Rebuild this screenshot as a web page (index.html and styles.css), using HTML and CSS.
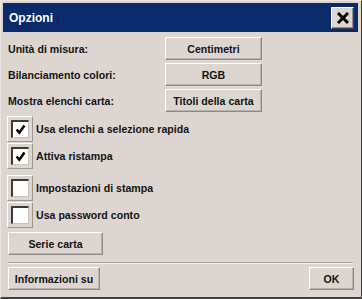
FILE: index.html
```html
<!DOCTYPE html>
<html lang="it">

<head>
    <meta charset="UTF-8">
    <meta name="viewport" content="width=device-width, initial-scale=1.0">
    <title>Opzioni</title>
    <link rel="stylesheet" href="styles.css">
</head>

<body>
    <div class="window">
        <div class="titlebar">
            <span class="title">Opzioni</span>
            <button class="close">
                <svg width="14" height="14" viewBox="0 0 14 14">
                    <path d="M2 2 L12 12 M12 2 L2 12" stroke="#000" stroke-width="3" fill="none" />
                </svg>
            </button>
        </div>

        <div class="content">
            <div class="setting">
                <span class="label">Unità di misura:</span>
                <button class="btn choice">Centimetri</button>
            </div>
            <div class="setting">
                <span class="label">Bilanciamento colori:</span>
                <button class="btn choice">RGB</button>
            </div>
            <div class="setting">
                <span class="label">Mostra elenchi carta:</span>
                <button class="btn choice">Titoli della carta</button>
            </div>

            <div class="checks">
                <label class="check">
                    <span class="frame"><span class="box">
                        <svg width="11" height="11" viewBox="0 0 14 14">
                            <path d="M2 7 L5.5 11 L12 2" stroke="#000" stroke-width="3.2" fill="none" />
                        </svg>
                    </span></span>
                    Usa elenchi a selezione rapida
                </label>
                <label class="check">
                    <span class="frame"><span class="box">
                        <svg width="11" height="11" viewBox="0 0 14 14">
                            <path d="M2 7 L5.5 11 L12 2" stroke="#000" stroke-width="3.2" fill="none" />
                        </svg>
                    </span></span>
                    Attiva ristampa
                </label>
            </div>

            <div class="checks second">
                <label class="check">
                    <span class="frame"><span class="box"></span></span>
                    Impostazioni di stampa
                </label>
                <label class="check">
                    <span class="frame"><span class="box"></span></span>
                    Usa password conto
                </label>
            </div>

            <button class="btn serie">Serie carta</button>
        </div>

        <div class="separator"></div>

        <div class="footer">
            <button class="btn info">Informazioni su</button>
            <button class="btn ok">OK</button>
        </div>
    </div>
</body>

</html>
```

FILE: styles.css
```css
* {
    margin: 0px;
    padding: 0px;
    box-sizing: border-box;
}

body {
    background-color: #ddd6d0;
    font-family: "Liberation Sans", Arial, sans-serif;
    font-size: 10.6px;
    font-weight: bold;
    color: #141414;
}

.window {
    width: 362px;
    height: 299px;
    border-top: 1px solid #ebe6e1;
    border-left: 1px solid #ebe6e1;
    border-right: 1px solid #404040;
    border-bottom: 2px solid #404040;
    padding: 2px 3px 0px 2px;
    display: flex;
    flex-direction: column;
}

.titlebar {
    height: 29px;
    background-color: #0b2a6b;
    display: flex;
    align-items: center;
    justify-content: space-between;
    padding: 0px 4px 0px 6px;
}

.title {
    color: white;
    font-size: 12px;
}

.close {
    width: 23px;
    height: 22px;
    background-color: #ddd6d0;
    border-top: 1px solid #ffffff;
    border-left: 1px solid #ffffff;
    border-right: 1px solid #404040;
    border-bottom: 1px solid #404040;
    box-shadow: inset -1px -1px #8e8984;
    display: flex;
    align-items: center;
    justify-content: center;
}

.content {
    padding: 5px 0px 0px 5px;
    display: flex;
    flex-direction: column;
}

.setting {
    display: flex;
    align-items: center;
    height: 23px;
    margin-bottom: 3px;
}

.label {
    width: 157px;
}

.btn {
    height: 23px;
    background-color: #ddd6d0;
    border-top: 1px solid #ffffff;
    border-left: 1px solid #ffffff;
    border-right: 1px solid #8e8984;
    border-bottom: 1px solid #8e8984;
    box-shadow: inset -1px -1px #b9b3ad;
    font-family: "Liberation Sans", Arial, sans-serif;
    font-size: 10.6px;
    font-weight: bold;
    color: #141414;
}

.choice {
    width: 97px;
}

.checks {
    display: flex;
    flex-direction: column;
    gap: 1px;
    margin-top: 1px;
    margin-left: -1px;
}

.checks.second {
    margin-top: 6px;
}

.check {
    display: flex;
    align-items: center;
    gap: 3px;
    height: 26px;
}

.frame {
    width: 26px;
    height: 26px;
    border-top: 1px solid #ffffff;
    border-left: 1px solid #ffffff;
    border-right: 1px solid #9c9690;
    border-bottom: 1px solid #9c9690;
    padding: 3px;
    display: flex;
}

.box {
    width: 18px;
    height: 18px;
    background-color: white;
    border-top: 2px solid #3a3a3a;
    border-left: 2px solid #3a3a3a;
    border-right: 1px solid #c8c2bc;
    border-bottom: 1px solid #c8c2bc;
    display: flex;
    align-items: center;
    justify-content: center;
}

.serie {
    width: 95px;
    margin-top: 4px;
}

.separator {
    height: 2px;
    margin: 7px 5px 0px 5px;
    border-top: 1px solid #a9a39d;
    border-bottom: 1px solid #f4f0ec;
}

.footer {
    display: flex;
    justify-content: space-between;
    margin: 3px 4px 0px 5px;
}

.info {
    width: 92px;
}

.ok {
    width: 45px;
}
```
